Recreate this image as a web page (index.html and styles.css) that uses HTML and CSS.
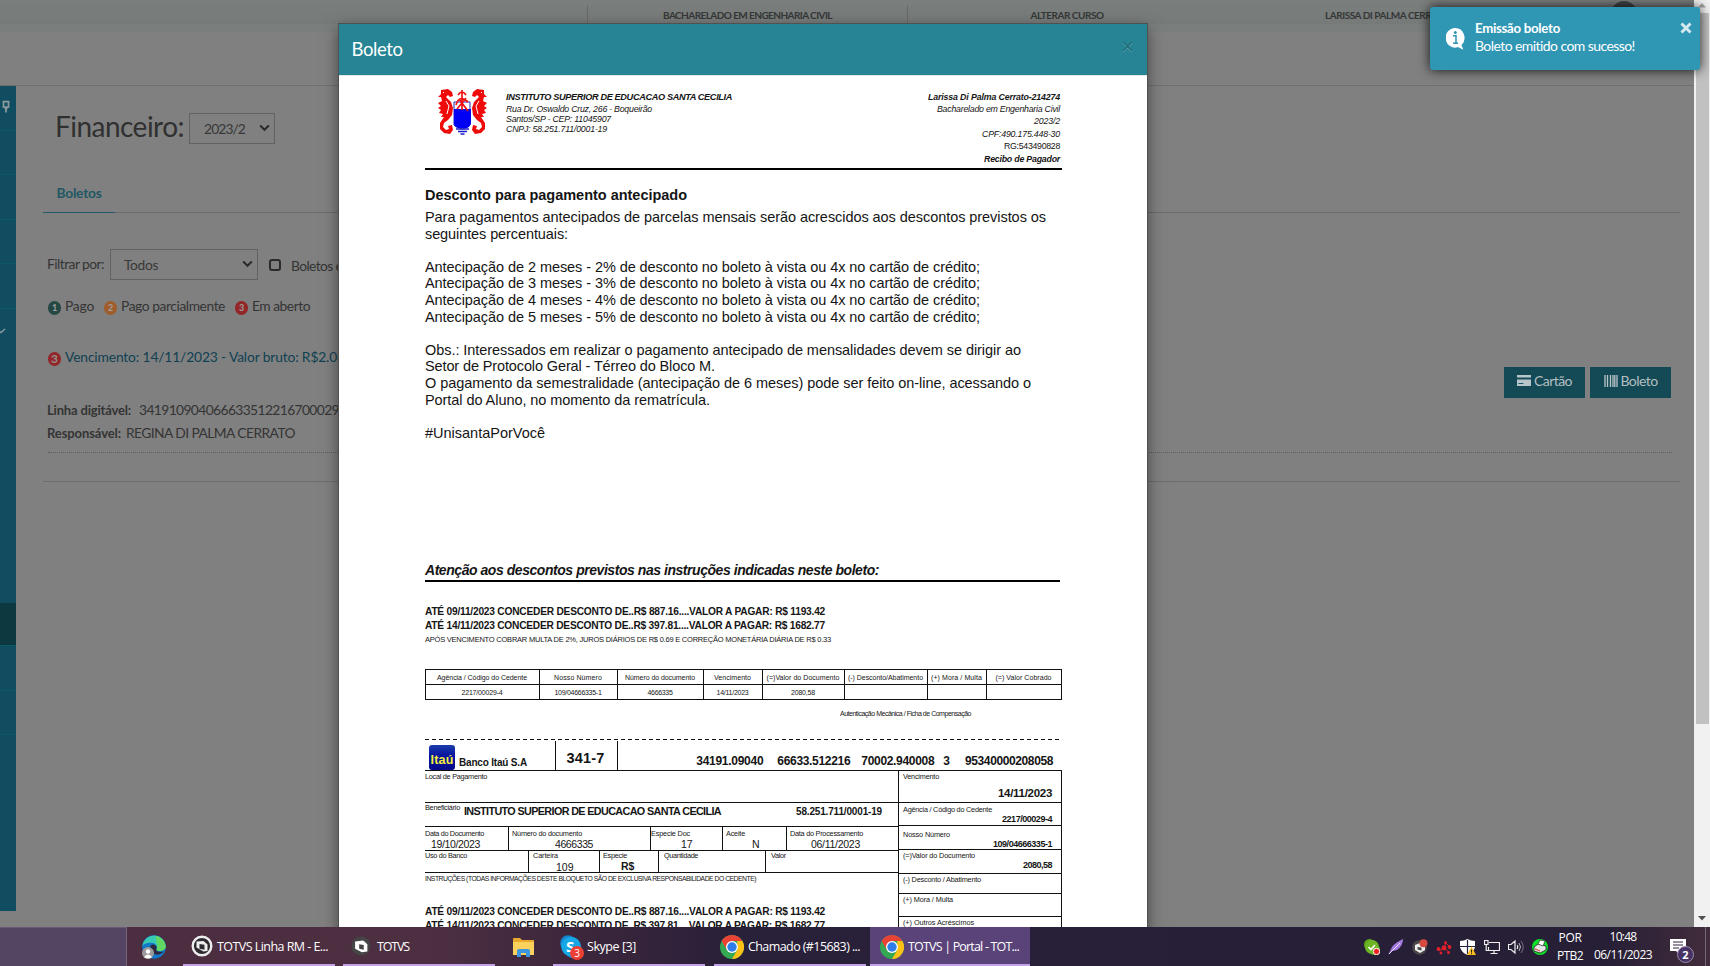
FILE: index.html
```html
<!DOCTYPE html>
<html lang="pt-BR">
<head>
<meta charset="utf-8">
<title>TOTVS | Portal</title>
<link rel="stylesheet" href="styles.css">
</head>
<body>
<div class="screen">
  <div class="browser">
    <div class="page">
      <div class="topstrip">
        <div class="top-cell course"><span data-w="169">BACHARELADO EM ENGENHARIA CIVIL</span></div>
        <div class="top-cell change"><span data-w="73">ALTERAR CURSO</span></div>
        <div class="top-cell user"><span data-w="125">LARISSA DI PALMA CERRATO</span></div>
        <div class="avatar"></div>
      </div>
      <div class="page-head"></div>
      <div class="page-row">
        <nav class="sidebar">
          <div class="side-item pin"><svg width="10" height="14" viewBox="0 0 10 14"><path d="M1.500 1.700h7M2.500 1.700v4.500M7.500 1.700v4.500M1.500 7h7M3.500 8.300h3M5 8v4.500" fill="none" stroke="#8d9a9d" stroke-width="1.700"/></svg></div>
          <div class="side-item"></div><div class="side-item"></div><div class="side-item"></div><div class="side-item"></div>
          <div class="side-item open"><svg width="6" height="6" viewBox="0 0 6 6"><path d="M0 3.500L1 4.500L5 1" fill="none" stroke="#8d9a9d" stroke-width="1.400"/></svg></div>
          <div class="side-gap"></div>
          <div class="side-item current"></div>
          <div class="side-item"></div><div class="side-item"></div>
        </nav>
        <main class="content">
          <div class="title-row">
            <h1><span data-w="129">Financeiro:</span></h1>
            <div class="select term"><span data-w="41">2023/2</span><svg width="11" height="8" viewBox="0 0 11 8"><path d="M1.200 1.500L5.500 5.800L9.800 1.500" fill="none" stroke="#2b2b2b" stroke-width="2"/></svg></div>
          </div>
          <div class="tabs"><div class="tab"><span data-w="45">Boletos</span></div></div>
          <div class="filter-row">
            <span class="filter-label" data-w="57">Filtrar por:</span>
            <div class="select status"><span data-w="34">Todos</span><svg width="11" height="8" viewBox="0 0 11 8"><path d="M1.200 1.500L5.500 5.800L9.800 1.500" fill="none" stroke="#2b2b2b" stroke-width="2"/></svg></div>
            <i class="check"></i>
            <span class="check-label" data-w="62">Boletos em</span>
          </div>
          <div class="legend">
            <b class="dot paid">1</b><span data-w="29">Pago</span>
            <b class="dot part">2</b><span data-w="104">Pago parcialmente</span>
            <b class="dot due">3</b><span data-w="58">Em aberto</span>
          </div>
          <div class="legend invoice"><b class="dot due big">3</b><span data-w="280">Vencimento: 14/11/2023 - Valor bruto: R$2.08</span></div>
          <div class="actions">
            <div class="btn"><svg width="14" height="11" viewBox="0 0 14 11"><path d="M0 0h14v2.500H0zM0 4.500h14V11H0z" fill="#b9c5c8"/><path d="M1.500 8.500h5" stroke="#175a68"/></svg><span data-w="38">Cartão</span></div>
            <div class="btn"><svg width="14" height="12" viewBox="0 0 14 12"><path d="M1 0v12M3.500 0v12M6.500 0v12M9 0v12M10.800 0v12M13 0v12" stroke="#b9c5c8" stroke-width="1.300"/></svg><span data-w="37">Boleto</span></div>
          </div>
          <div class="detail line-code"><b data-w="84">Linha digitável:</b><span data-w="200">341910904066633512216700029</span></div>
          <div class="detail payer"><b data-w="74">Responsável:</b><span data-w="169">REGINA DI PALMA CERRATO</span></div>
          <div class="dotted"></div>
          <div class="solid"></div>
        </main>
      </div>
    </div>
    <div class="backdrop"></div>

    <section class="modal">
      <header class="modal-head"><span data-w="51">Boleto</span><svg class="close" width="11" height="11" viewBox="0 0 11 11"><path d="M1 2l9 9M10 2l-9 9" stroke="#5ba3b0" stroke-width="1.400"/><path d="M1 1l9 9M10 1l-9 9" stroke="#1f6a77" stroke-width="1.400"/></svg></header>
      <div class="paper">
        <div class="doc-head">
          <svg class="crest" width="50" height="47" viewBox="0 0 50 47">
            <g id="horse" fill="#f00b0b"><path d="M3 1L10 0L14 3L15 7L12 8L10 6L8 8L13 13L15 19L14 26L10 31L6 34L5 38L8 41L11 40L10 37L14 36L15 41L12 45L6 44L2 40L2 34L6 28L3 28L5 25L1 24L3 21L0 19L3 17L0 14L4 12L3 8L0 8L3 5Z"/><path d="M5 3l1 1M8 12l3 5l-2 8" fill="none" stroke="#fff" stroke-width="1"/></g>
            <use href="#horse" transform="translate(49 0) scale(-1 1)"/>
            <path d="M16 13H32V36Q29 39 24.500 40Q19 39 16 36Z" fill="#fff" stroke="#22b" stroke-width="1"/>
            <path d="M16 20H33V34Q32 38 29 39H20Q16 38 16 34Z" fill="#0000f4"/>
            <path d="M18 40h13M20 42.500h9M22.500 45h4" stroke="#1a1ad0" stroke-width="1.700"/>
            <path d="M24 1v20M20 6q4-6 8 0M18 16q3-11 12-3M19 20l9-11M21 10l9 12" fill="none" stroke="#ef1111" stroke-width="1.700"/>
          </svg>
          <div class="issuer">
            <b data-w="226">INSTITUTO SUPERIOR DE EDUCACAO SANTA CECILIA</b>
            <span data-w="146">Rua Dr. Oswaldo Cruz, 266 - Boqueirão</span>
            <span data-w="105">Santos/SP - CEP: 11045907</span>
            <span data-w="101">CNPJ: 58.251.711/0001-19</span>
          </div>
          <div class="student">
            <b data-w="132">Larissa Di Palma Cerrato-214274</b>
            <span data-w="123">Bacharelado em Engenharia Civil</span>
            <span data-w="26">2023/2</span>
            <span data-w="78">CPF:490.175.448-30</span>
            <span class="upright" data-w="56">RG:543490828</span>
            <b data-w="76">Recibo de Pagador</b>
          </div>
        </div>

        <div class="notice">
          <h2><span data-w="262">Desconto para pagamento antecipado</span></h2>
          <div class="notice-text">
            <p><span data-w="621">Para pagamentos antecipados de parcelas mensais serão acrescidos aos descontos previstos os</span></p>
            <p><span data-w="143">seguintes percentuais:</span></p>
            <p class="gap"><span data-w="555">Antecipação de 2 meses - 2% de desconto no boleto à vista ou 4x no cartão de crédito;</span></p>
            <p><span data-w="555">Antecipação de 3 meses - 3% de desconto no boleto à vista ou 4x no cartão de crédito;</span></p>
            <p><span data-w="555">Antecipação de 4 meses - 4% de desconto no boleto à vista ou 4x no cartão de crédito;</span></p>
            <p><span data-w="555">Antecipação de 5 meses - 5% de desconto no boleto à vista ou 4x no cartão de crédito;</span></p>
            <p class="gap"><span data-w="596">Obs.: Interessados em realizar o pagamento antecipado de mensalidades devem se dirigir ao</span></p>
            <p><span data-w="290">Setor de Protocolo Geral - Térreo do Bloco M.</span></p>
            <p><span data-w="606">O pagamento da semestralidade (antecipação de 6 meses) pode ser feito on-line, acessando o</span></p>
            <p><span data-w="285">Portal do Aluno, no momento da rematrícula.</span></p>
            <p class="gap"><span data-w="120">#UnisantaPorVocê</span></p>
          </div>
          <h3><span data-w="454">Atenção aos descontos previstos nas instruções indicadas neste boleto:</span></h3>
        </div>

        <div class="discounts">
          <b data-w="400">ATÉ 09/11/2023 CONCEDER DESCONTO DE..R$ 887.16....VALOR A PAGAR: R$ 1193.42</b>
          <b data-w="400">ATÉ 14/11/2023 CONCEDER DESCONTO DE..R$ 397.81....VALOR A PAGAR: R$ 1682.77</b>
          <span data-w="406">APÓS VENCIMENTO COBRAR MULTA DE 2%, JUROS DIÁRIOS DE R$ 0.69 E CORREÇÃO MONETÁRIA DIÁRIA DE R$ 0.33</span>
        </div>

        <div class="summary">
          <div><span data-w="90">Agência / Código do Cedente</span></div><div><span data-w="48">Nosso Número</span></div><div><span data-w="70">Número do documento</span></div><div><span data-w="37">Vencimento</span></div><div><span data-w="73">(=)Valor do Documento</span></div><div><span data-w="75">(-) Desconto/Abatimento</span></div><div><span data-w="51">(+) Mora / Multa</span></div><div><span data-w="56">(=) Valor Cobrado</span></div>
          <div><span data-w="41">2217/00029-4</span></div><div><span data-w="47">109/04666335-1</span></div><div><span data-w="25">4666335</span></div><div><span data-w="32">14/11/2023</span></div><div><span data-w="24">2080,58</span></div><div></div><div></div><div></div>
        </div>
        <div class="auth"><span data-w="131">Autenticação Mecânica / Ficha de Compensação</span></div>

        <div class="bank-row">
          <div class="bank"><div class="itau"><span data-w="23">Itaú</span></div><b data-w="68">Banco Itaú S.A</b></div>
          <div class="bank-code"><b data-w="38">341-7</b></div>
          <div class="digits"><b data-w="67">34191.09040</b><b data-w="73">66633.512216</b><b data-w="73">70002.940008</b><b>3</b><b data-w="88">95340000208058</b></div>
        </div>

        <div class="form">
          <div class="form-left">
            <div class="row place"><span class="label" data-w="62">Local de Pagamento</span></div>
            <div class="row payee"><span class="label" data-w="35">Beneficiário</span><b class="payee-name" data-w="257">INSTITUTO SUPERIOR DE EDUCACAO SANTA CECILIA</b><b class="payee-id" data-w="86">58.251.711/0001-19</b></div>
            <div class="row docs">
              <div class="cell"><span class="label" data-w="59">Data do Documento</span><span class="value v1" data-w="49">19/10/2023</span></div>
              <div class="cell"><span class="label" data-w="70">Número do documento</span><span class="value v2" data-w="38">4666335</span></div>
              <div class="cell tight"><span class="label" data-w="39">Especie Doc</span><span class="value v3">17</span></div>
              <div class="cell"><span class="label" data-w="19">Aceite</span><span class="value v4">N</span></div>
              <div class="cell"><span class="label" data-w="73">Data do Processamento</span><span class="value v5" data-w="49">06/11/2023</span></div>
            </div>
            <div class="row uses">
              <div class="cell"><span class="label" data-w="42">Uso do Banco</span></div>
              <div class="cell"><span class="label" data-w="25">Carteira</span><span class="value w2">109</span></div>
              <div class="cell"><span class="label" data-w="24">Especie</span><b class="value w3">R$</b></div>
              <div class="cell"><span class="label" data-w="34">Quantidade</span></div>
              <div class="cell"><span class="label" data-w="15">Valor</span></div>
            </div>
            <div class="instructions">
              <span class="label" data-w="331">INSTRUÇÕES (TODAS INFORMAÇÕES DESTE BLOQUETO SÃO DE EXCLUSIVA RESPONSABILIDADE DO CEDENTE)</span>
              <b data-w="400">ATÉ 09/11/2023 CONCEDER DESCONTO DE..R$ 887.16....VALOR A PAGAR: R$ 1193.42</b>
              <b data-w="400">ATÉ 14/11/2023 CONCEDER DESCONTO DE..R$ 397.81....VALOR A PAGAR: R$ 1682.77</b>
            </div>
          </div>
          <div class="form-right">
            <div class="fr r1"><span class="label" data-w="36">Vencimento</span><b class="due-date" data-w="54">14/11/2023</b></div>
            <div class="fr r2"><span class="label" data-w="89">Agência / Código do Cedente</span><b data-w="50">2217/00029-4</b></div>
            <div class="fr r3"><span class="label" data-w="47">Nosso Número</span><b data-w="59">109/04666335-1</b></div>
            <div class="fr r4"><span class="label" data-w="72">(=)Valor do Documento</span><b data-w="29">2080,58</b></div>
            <div class="fr r5"><span class="label" data-w="78">(-) Desconto / Abatimento</span></div>
            <div class="fr r6"><span class="label" data-w="50">(+) Mora / Multa</span></div>
            <div class="fr r7"><span class="label" data-w="71">(+) Outros Acréscimos</span></div>
          </div>
        </div>
      </div>
    </section>

    <div class="scrollbar"><svg width="8" height="5" viewBox="0 0 8 5"><path d="M4 0l4 4.500H0z" fill="#a3a3a3"/></svg><div class="thumb"></div><svg class="down" width="8" height="5" viewBox="0 0 8 5"><path d="M4 4.500l4-4.500H0z" fill="#505050"/></svg></div>

    <aside class="toast">
      <svg class="info" width="19" height="22" viewBox="0 0 19 22"><path d="M9.300 0a9.300 9.800 0 0 1 6.200 17l1.800 4.800l-5.500-2.700A9.300 9.800 0 1 1 9.300 0z" fill="#fff"/><circle cx="9.300" cy="4.500" r="1.500" fill="#2f96b4"/><path d="M7 7.800h3v7M7 15.300h5" fill="none" stroke="#2f96b4" stroke-width="1.500"/></svg>
      <div class="toast-text"><b data-w="85">Emissão boleto</b><span data-w="160">Boleto emitido com sucesso!</span></div>
      <svg class="toast-x" width="12" height="12" viewBox="0 0 12 12"><path d="M1.500 1.500l9 9M10.500 1.500l-9 9" stroke="#d5eaf0" stroke-width="3"/></svg>
    </aside>
  </div>

  <footer class="taskbar">
    <div class="search"></div>
    <svg class="edge" width="24" height="24" viewBox="0 0 24 24"><circle cx="12" cy="12" r="11.800" fill="#1278c8"/><path d="M.3 11A11.800 11.800 0 0 1 23.800 11.500C23.500 16 17 17 14.500 15C16 12 14 8 9.500 7.800C5 7.500 1.500 9 .3 11z" fill="#37c9b4"/><path d="M14 1a11.800 11.800 0 0 1 9.800 10.500C23.500 16 17 17 14.500 15C17 10 13 6 14 1z" fill="#62d862"/><path d="M9 10c4-2 7 2 5 5c1 2 5 2.500 7.500 1.500C18 21 12 20 10 17C8 14 8 12 9 10z" fill="#2c263e"/><circle cx="6" cy="18" r="6" fill="#9b9b9b"/><circle cx="6" cy="16.500" r="2.200" fill="#fff"/><path d="M2 22q4-5 8 0q-4 3-8 0" fill="#fff"/></svg>
    <div class="task t1"><svg width="22" height="22" viewBox="0 0 22 22"><circle cx="11" cy="11" r="9.300" fill="#2d2a31" stroke="#eee" stroke-width="2.400"/><path d="M5.500 6.500l7-.5l4 3.500v6.500l-4 .5l-7-4z" fill="#eee"/><path d="M8.500 9l5 .8v5l-5-1z" fill="#2d2a31"/></svg><span data-w="111">TOTVS Linha RM - E...</span></div>
    <div class="task t2"><svg width="20" height="22" viewBox="0 0 22 22"><circle cx="11" cy="11" r="10.500" fill="#454545"/><path d="M4.500 6l9-1l4.500 4v8l-6 1l-7.500-4z" fill="#fff"/><path d="M9 9l5 1v5l-5-1z" fill="#454545"/></svg><span data-w="32">TOTVS</span></div>
    <svg class="folder" width="22" height="19" viewBox="0 0 22 19"><path d="M0 1q0-1 1-1h6l2 2h12v15H0z" fill="#e8a92c"/><path d="M0 4h21v13H0z" fill="#fbd25c"/><path d="M4 19v-6q0-2 2-2h9q2 0 2 2v6h-4v-4H8v4z" fill="#3d96e0"/></svg>
    <div class="task t3"><div class="skype"><svg width="23" height="24" viewBox="0 0 23 24"><circle cx="8" cy="8" r="7.800" fill="#1683cf"/><circle cx="13.500" cy="15" r="8.500" fill="#1683cf"/><circle cx="11" cy="11.500" r="9.800" fill="#16a7e5"/></svg><b class="skype-s">S</b><b class="count">3</b></div><span data-w="49">Skype [3]</span></div>
    <div class="task t4"><svg width="24" height="24" viewBox="0 0 24 24"><g id="chrome"><circle cx="12" cy="12" r="12" fill="#34a853"/><path d="M12 0A12 12 0 0 1 22.400 6H12L6.800 15L1.600 6A12 12 0 0 1 12 0z" fill="#ea4335"/><path d="M22.400 6A12 12 0 0 1 12 24L17.200 15V6z" fill="#fbc116"/><circle cx="12" cy="12" r="6" fill="#fff"/><circle cx="12" cy="12" r="4.700" fill="#2f7de9"/></g></svg><span data-w="112">Chamado (#15683) ...</span></div>
    <div class="task t5"><svg width="24" height="24" viewBox="0 0 24 24"><use href="#chrome"/></svg><span data-w="111">TOTVS | Portal - TOT...</span></div>
    <div class="tray">
      <svg width="16" height="16" viewBox="0 0 16 16"><circle cx="5.500" cy="5.500" r="5.500" fill="#5ea51c"/><circle cx="10.500" cy="10.500" r="5.500" fill="#5ea51c"/><circle cx="8" cy="8" r="7" fill="#6db526"/><path d="M4.500 8l2.500 2.500l4-4.500" fill="none" stroke="#fff" stroke-width="1.600"/><circle cx="12.500" cy="12.500" r="3.200" fill="#e22" stroke="#fff"/></svg>
      <svg width="16" height="16" viewBox="0 0 16 16"><path d="M0 16L4 8Q8 3 15 0Q15 7 9 11Q5 12 3 12z" fill="#a57be0"/><path d="M1 15L12 4" stroke="#eadcff"/></svg>
      <svg width="16" height="16" viewBox="0 0 16 16"><circle cx="7.500" cy="8.500" r="7.300" fill="#4b4747"/><path d="M3 6l5-2l5 3v4l-5 3l-5-3z" fill="#eee"/><path d="M5.500 8l4 .5v3l-4-1z" fill="#444"/><circle cx="11.500" cy="4.200" r="4" fill="#d5493e"/></svg>
      <svg width="16" height="16" viewBox="0 0 16 16"><path d="M3 12L8 9L13 13M8 9L10 4L14 8" fill="none" stroke="#e2202a" stroke-width=".9"/><g fill="#e2202a"><circle cx="8" cy="9" r="2.400"/><circle cx="2.500" cy="10" r="2"/><circle cx="9.500" cy="3.500" r="1.500"/><circle cx="13.500" cy="8" r="1.900"/><circle cx="5" cy="14" r="1.400"/><circle cx="12.500" cy="13.500" r="1.500"/></g></svg>
      <svg width="16" height="16" viewBox="0 0 16 16"><path d="M7.500 0Q11 2 15 2V8Q14 13 7.500 16Q1 13 0 8V2Q4 2 7.500 0z" fill="#fff"/><path d="M7.500 1v14M0 7.500h15" stroke="#29203a" stroke-width="1.200"/><path d="M11.500 7.500L16 16H7z" fill="#f9bd20"/><path d="M11.500 10.500v3M11.500 14.200v1" stroke="#222"/></svg>
      <svg width="16" height="16" viewBox="0 0 16 16"><path d="M5 3.500h10.500v8H4.500V8M10 12v2.500M6.500 14.500h7M.5 1.500h3.500v4H.5zM2.200 5.500v6h2" fill="none" stroke="#eee" stroke-width="1.200"/></svg>
      <svg width="16" height="16" viewBox="0 0 16 16"><path d="M.5 5.500H3L7 2v12L3 10.500H.5zM9 6q1.500 2 0 4" fill="none" stroke="#eee" stroke-width="1.200"/><path d="M11 4q3 4 0 8" fill="none" stroke="#bbb"/><path d="M13 2q4.500 6 0 12" fill="none" stroke="#776e82"/></svg>
      <svg width="16" height="16" viewBox="0 0 16 16"><circle cx="8" cy="8" r="8" fill="#0be325"/><path d="M2 8l4-3l8 2v4l-6 3l-6-2z" fill="#e5e5e5" stroke="#222" stroke-width=".8"/><path d="M6 5l2-4l5 1l-2 5z" fill="#fff" stroke="#333" stroke-width=".7"/><path d="M3 10l5 2" stroke="#d33"/></svg>
    </div>
    <div class="lang"><span data-w="23">POR</span><span data-w="26">PTB2</span></div>
    <div class="clock"><span data-w="27">10:48</span><span data-w="58">06/11/2023</span></div>
    <div class="notes"><svg width="16" height="15" viewBox="0 0 16 15"><path d="M0 0h16v12H9v3l-3-3H0z" fill="#fff"/><path d="M3 3h10M3 6h10M3 9h6" stroke="#30243d"/></svg><b class="note-count">2</b></div>
  </footer>
</div>
<script src="fit.js"></script>
</body>
</html>
```
FILE: styles.css
```css
* { box-sizing: border-box; }
body { margin: 0; overflow: hidden; font-family: Lato, "Open Sans", sans-serif; }
h1, h2, h3, p { margin: 0; font-weight: 400; }
svg { display: block; flex: none; }
[data-w] { display: inline-block; white-space: nowrap; flex: none; }

.screen { width: 1710px; height: 966px; display: flex; flex-direction: column; overflow: hidden; }
.browser { position: relative; height: 927px; flex: none; overflow: hidden; background: #808080; }

/* page under the dialog */
.page { width: 1694px; height: 927px; overflow: hidden; color: #343434; font-size: 13.800px; background: #808080; }
.topstrip { height: 32px; background: #7a7e7d; display: flex; font-size: 10px; font-weight: 700; color: #363838; }
.top-cell { height: 27px; margin-top: 5px; line-height: 20px; text-align: center; border-left: 1px solid #696c6b; }
.course { margin-left: 587px; width: 320px; }
.change { width: 321px; padding-right: 2px; }
.user { width: 340px; padding-left: 97px; text-align: left; border-left: 0; }
.avatar { width: 26px; height: 26px; margin: 1px 0 0 43px; border-radius: 50%; background: #3f4342; }
.page-head { height: 54px; border-bottom: 1px solid #707070; }
.page-row { display: flex; height: 841px; }
.sidebar { width: 16px; height: 825px; background: #114d61; flex: none; }
.side-item { height: 44.500px; border-bottom: 1px solid #0e5864; }
.pin { padding: 14px 0 0 1px; }
.open { padding-top: 19px; border-bottom: 0; }
.side-gap { height: 250px; }
.current { height: 43px; background: #0c393f; }
.content { width: 1637px; margin-left: 27px; }
.title-row { display: flex; align-items: center; gap: 5px; padding-left: 12px; margin-top: 27px; height: 31px; }
.title-row h1 { font-size: 28px; line-height: 34px; padding-bottom: 6px; color: #303030; }
.select { height: 31px; border: 1px solid #626262; display: flex; align-items: center; justify-content: space-between; color: #383838; }
.term { width: 86px; padding: 0 4px 1px 14px; }
.status { width: 148px; padding: 0 4px 1px 13px; margin-left: 6px; }
.tabs { display: flex; margin-top: 28px; height: 41px; border-bottom: 1px solid #6b6b6b; }
.tab { width: 72px; height: 41px; line-height: 42px; text-align: center; font-weight: 700; color: #225865; border-bottom: 1px solid #1f5a67; }
.filter-row { display: flex; align-items: center; height: 31px; margin-top: 36px; padding-left: 4px; }
.filter-label { margin-bottom: 2px; }
.check { width: 12px; height: 12px; border: 2px solid #2b2b2b; border-radius: 3px; margin: 1px 10px 0 11px; }
.check-label { margin-top: 2px; }
.legend { display: flex; height: 20px; line-height: 20px; margin-top: 16px; padding-left: 5px; }
.legend span { margin: 0 10px 0 4px; }
.dot { width: 13px; height: 14px; border-radius: 7px; margin-top: 5px; font-size: 9px; line-height: 13px; text-align: center; color: #a0a0a0; }
.big { font-size: 12px; color: #958f8f; }
.paid { background: #254844; }
.part { background: #9f5d2c; }
.due { background: #922628; }
.invoice { margin-top: 31px; color: #0f4152; }
.actions { display: flex; justify-content: flex-end; gap: 5px; height: 31px; padding-right: 9px; }
.btn { width: 81px; height: 31px; background: #134a56; color: #b3bec1; display: flex; gap: 3px; align-items: center; justify-content: center; padding-bottom: 4px; font-size: 14px; }
.detail { display: flex; height: 20px; line-height: 20px; padding-left: 4px; }
.line-code { margin-top: 2px; gap: 8px; }
.payer { margin-top: 3px; gap: 5px; }
.detail b { font-size: 13px; }
.dotted { margin: 9px 8px 0 5px; border-top: 1px dotted #5c5c5c; }
.solid { margin-top: 28px; border-top: 1px solid #6d6d6d; }
.backdrop { position: absolute; left: 0; right: 0; top: 0; height: 24px; background: linear-gradient(transparent, rgba(0,0,0,.03)); }

/* dialog */
.modal { position: absolute; left: 339px; top: 24px; width: 808px; height: 930px; background: #fff; box-shadow: 0 0 0 1px #505252, 0 5px 15px rgba(0,0,0,.5); color: #151515; font-family: "Liberation Sans", Arial, sans-serif; }
.modal-head { display: flex; justify-content: space-between; height: 52px; background: #278494; border-bottom: 1px solid #e5e5e5; color: #fff; font: 400 18.500px/51px Lato, sans-serif; padding-left: 12.500px; }
.close { margin: 17px 14px 0 0; }
.paper { width: 637px; margin-left: 86px; }
.doc-head { height: 94px; display: flex; border-bottom: 2px solid #000; font-size: 8.800px; font-style: italic; }
.crest { margin: 13px 0 0 13px; }
.issuer { display: flex; flex-direction: column; align-items: flex-start; margin-left: 18px; padding-top: 15px; line-height: 9.900px; }
.issuer b { font-size: 9.200px; line-height: 13px; margin-bottom: 1px; }
.student { display: flex; flex-direction: column; align-items: flex-end; margin-left: auto; padding: 14.500px 2px 0 0; line-height: 12.400px; }
.upright { font-style: normal; }
.notice { height: 412px; padding-top: 16.500px; }
.notice h2 { font-size: 14.500px; line-height: 17px; font-weight: 700; height: 17px; }
.notice-text { font-size: 14.500px; line-height: 16.600px; margin-top: 5.500px; }
.notice-text p { height: 16.600px; }
.notice-text .gap { margin-top: 16.600px; }
.notice h3 { width: 635px; height: 21px; margin-top: 119.500px; border-bottom: 2px solid #000; font-size: 14px; font-style: italic; font-weight: 700; line-height: 18px; }
.discounts { display: flex; flex-direction: column; align-items: flex-start; height: 87px; padding-top: 23.300px; font-size: 7.500px; line-height: 14px; }
.discounts b, .instructions b { font-size: 10.200px; line-height: 14px; }
.summary { display: grid; grid-template-columns: 114px 78px 86px 59px 82px 83px 59px 75px; grid-template-rows: 15px 15px; width: 637px; height: 31px; border-top: 1px solid #111; border-left: 1px solid #111; font-size: 7px; line-height: 15px; text-align: center; }
.summary div { border-right: 1px solid #111; border-bottom: 1px solid #111; overflow: hidden; padding-right: 1px; }
.auth { height: 39px; padding: 8px 91px 0 0; text-align: right; font-size: 7px; line-height: 12px; }
.bank-row { display: flex; height: 32px; padding-top: 2px; border-bottom: 1px solid #111; background: repeating-linear-gradient(90deg, #111 0 4px, transparent 4px 7px) top / 100% 1px no-repeat; }
.bank { width: 130px; display: flex; gap: 4px; padding: 4px 0 0 4px; font-size: 10px; line-height: 35px; }
.itau { width: 26px; height: 25px; border-radius: 3px; background: linear-gradient(#1b3eaa, #0711a0 45%, #040c8a); color: #f4ee3c; font-size: 12.500px; font-weight: 700; line-height: 31px; text-align: center; }
.bank-code { width: 63px; border-left: 1.500px solid #111; border-right: 1.500px solid #111; text-align: center; font-size: 14.500px; line-height: 34px; padding-right: 2px; }
.digits { flex: 1; display: flex; justify-content: flex-end; padding-right: 9px; font-size: 12px; line-height: 40px; }
.digits b:nth-child(2) { margin-left: 14px; }
.digits b:nth-child(3) { margin-left: 11px; }
.digits b:nth-child(4) { margin: 0 15px 0 9px; }
.form { display: flex; height: 190px; }
.form-left { width: 474px; border-right: 1px solid #111; }
.form-right { width: 163px; border-right: 1px solid #111; }
.label { font-size: 7.300px; line-height: 10px; height: 10px; }
.row { border-bottom: 1px solid #111; display: flex; }
.place { height: 32px; padding-top: 1px; }
.payee { height: 24px; }
.payee-name { font-size: 10.800px; line-height: 17px; margin-left: 4px; }
.payee-id { font-size: 10px; line-height: 17px; margin-left: auto; margin-right: 16px; }
.cell { display: flex; flex-direction: column; align-items: flex-start; border-left: 1px solid #111; padding-left: 3px; }
.cell:first-child { border-left: 0; padding-left: 0; }
.value { font-size: 10.500px; line-height: 11px; }
.docs { height: 24px; }
.docs .cell { padding-top: 1.500px; }
.docs .cell:nth-child(1) { width: 83px; }
.docs .cell:nth-child(2) { width: 142px; }
.docs .cell.tight { width: 72px; padding-left: 0; }
.docs .cell:nth-child(4) { width: 64px; }
.v1 { margin-left: 6px; }
.v2 { margin-left: 43px; }
.v3 { margin-left: 30px; }
.v4 { margin-left: 26px; }
.v5 { margin-left: 21px; }
.uses { height: 22px; }
.uses .cell:nth-child(1) { width: 103px; }
.uses .cell:nth-child(2) { width: 71px; padding-left: 4px; }
.uses .cell:nth-child(3) { width: 59px; }
.uses .cell:nth-child(4) { width: 107px; padding-left: 5px; }
.uses .cell:nth-child(5) { padding-left: 5px; }
.w2 { margin: 1px 0 0 23px; }
.w3 { margin-left: 18px; }
.instructions { display: flex; flex-direction: column; align-items: flex-start; padding-top: 1px; }
.instructions .label { font-size: 6.800px; margin-bottom: 21px; }
.fr { display: flex; flex-direction: column; align-items: flex-start; border-bottom: 1px solid #111; padding: 1px 9px 0 4px; }
.fr b { align-self: flex-end; font-size: 9px; line-height: 10px; }
.r1 { height: 32px; }
.r1 .due-date { font-size: 11.500px; margin-top: 6px; }
.r2 { height: 23px; padding-top: 2px; }
.r2 b { margin-top: -1px; }
.r3 { height: 24px; padding-top: 4px; }
.r3 b { margin-top: -1px; }
.r4 { height: 24px; }
.r4 b { margin-top: -1px; }
.r5 { height: 20px; }
.r7 { border-bottom: 0; }
.r6 { height: 23px; }

/* scroll bar and toast */
.scrollbar { position: absolute; right: 0; top: 0; width: 16px; height: 927px; background: #f1f1f1; display: flex; flex-direction: column; align-items: center; padding-top: 3px; }
.thumb { width: 13px; height: 711px; margin-top: 5px; background: #c1c1c1; }
.down { margin-top: 192px; }
.toast { position: absolute; left: 1430px; top: 7px; width: 270px; height: 63px; border-radius: 3px; background: #2f96b4; box-shadow: 0 0 12px rgba(0,0,0,.85); color: #fff; display: flex; padding: 0 8px 0 16px; }
.info { margin-top: 21px; }
.toast-text { display: flex; flex-direction: column; align-items: flex-start; margin: 13px auto 0 10px; font-size: 14px; line-height: 17px; }
.toast-text b { font-size: 13.200px; }
.toast-x { margin-top: 15px; }

/* taskbar */
.taskbar { height: 39px; display: flex; background: linear-gradient(90deg, #4b2d3f 0, #4d2f42 25%, #3e273c 33%, #292039 43%, #261f36 94%, #422c3b 100%); color: #fff; font-family: "Open Sans", "Noto Sans", sans-serif; font-size: 12.500px; }
.search { width: 127px; background: #544662; border-top: 1px solid #6a5a76; border-right: 1px solid #75657f; }
.edge { margin: 8px 17px 0 15px; }
.task { width: 152px; height: 39px; border-bottom: 2px solid #c3a1e8; display: flex; gap: 5px; padding: 8px 0 0 8px; line-height: 24px; }
.t1 { gap: 4px; }
.t2 { margin-left: 8px; gap: 6px; }
.folder { margin: 11px 18px 0 18px; }
.t3 { padding-left: 7px; gap: 4px; }
.t4 { margin-left: 9px; padding-left: 6px; gap: 4px; }
.t5 { width: 160px; margin-left: 4px; padding-left: 10px; gap: 4px; background: #594379; }
.skype { position: relative; width: 23px; height: 24px; }
.skype-s { position: absolute; left: 6px; top: 2px; font-size: 15px; line-height: 18px; }
.count { position: absolute; left: 10px; top: 11px; width: 14px; height: 14px; border-radius: 7px; background: #ee3f35; font-size: 10px; line-height: 14px; text-align: center; font-weight: 400; }
.tray { display: flex; gap: 8px; margin: 12px 0 0 334px; }
.lang, .clock { display: flex; flex-direction: column; align-items: center; font-size: 12px; line-height: 18px; padding-top: 2px; }
.lang { margin-left: 9px; width: 26px; }
.clock { margin-left: 11px; width: 58px; padding-top: 1px; }
.notes { position: relative; width: 36px; margin-left: 18px; padding-top: 12px; border-right: 1px solid #776a76; }
.note-count { position: absolute; left: 7px; top: 19px; width: 17px; height: 17px; border-radius: 50%; background: #473366; border: 1px solid #9a8bab; font-size: 11px; line-height: 15px; text-align: center; }
```
FILE: fit.js
```js
// Tracks every run of text with a data-w so that it fills its printed width.
document.querySelectorAll('[data-w]').forEach(function (el) {
  var natural = el.getBoundingClientRect().width;
  var gap = (Number(el.dataset.w) - natural) / el.textContent.length;
  el.style.letterSpacing = gap.toFixed(3) + 'px';
});
```
